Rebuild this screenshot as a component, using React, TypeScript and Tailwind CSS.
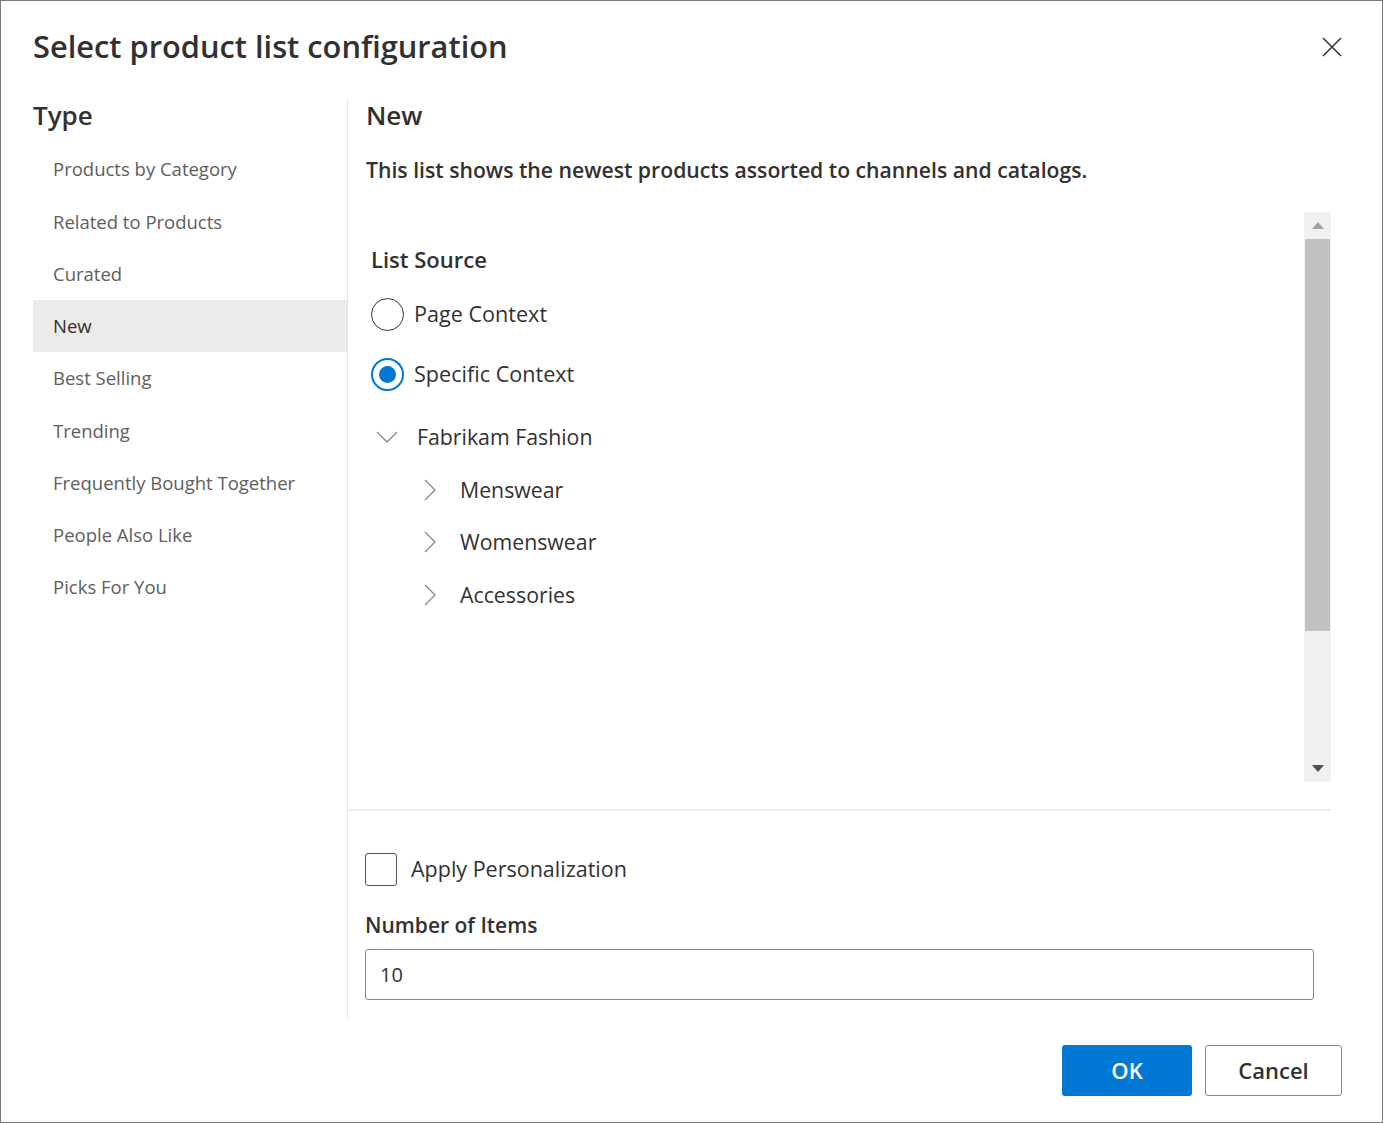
import React from 'react';

const types = [
  'Products by Category',
  'Related to Products',
  'Curated',
  'New',
  'Best Selling',
  'Trending',
  'Frequently Bought Together',
  'People Also Like',
  'Picks For You',
];

const children = ['Menswear', 'Womenswear', 'Accessories'];

const ChevronRight: React.FC = () => (
  <svg width="12" height="22" viewBox="0 0 12 22" fill="none">
    <path d="M1 1l10 10L1 21" stroke="#8a8886" strokeWidth="1.3" />
  </svg>
);

const ChevronDown: React.FC = () => (
  <svg width="22" height="12" viewBox="0 0 22 12" fill="none">
    <path d="M1 1l10 10L21 1" stroke="#8a8886" strokeWidth="1.3" />
  </svg>
);

const App: React.FC = () => {
  return (
    <div
      className="w-[1383px] h-[1123px] bg-white border border-[#7a7a7a] flex flex-col text-[#323130]"
      style={{ fontFamily: '"Open Sans", "Noto Sans", sans-serif' }}
    >
      {/* header */}
      <div className="flex justify-between items-center pt-[28px] pl-[32px] pr-[40px] h-[64px]">
        <h1 className="text-[30.8px] leading-[36px] font-semibold -mt-[2px]">Select product list configuration</h1>
        <svg width="20" height="20" viewBox="0 0 20 20">
          <path d="M1 1l18 18M19 1L1 19" stroke="#323130" strokeWidth="1.5" />
        </svg>
      </div>

      {/* body */}
      <div className="flex mt-[34px] h-[919px] pl-[32px]">
        <div className="w-[314px] flex flex-col">
          <div className="h-[32px] leading-[32px] text-[26px] font-semibold">Type</div>
          <ul className="mt-[12px]">
            {types.map((t) => (
              <li
                key={t}
                className={`h-[52.25px] flex items-center pl-[20px] text-[18.5px] ${
                  t === 'New' ? 'bg-[#edebe9] text-[#323130]' : 'text-[#605e5c]'
                }`}
              >
                {t}
              </li>
            ))}
          </ul>
        </div>

        <div className="w-[984px] border-l border-[#e6e6e6] flex flex-col">
          <div className="pl-[18px] h-[32px] leading-[32px] text-[26px] font-semibold">New</div>
          <p className="pl-[18px] mt-[25px] h-[28px] leading-[28px] text-[21.2px] font-semibold">
            This list shows the newest products assorted to channels and catalogs.
          </p>

          {/* scroll area */}
          <div className="mt-[28px] h-[570px] flex">
            <div className="flex-1 pl-[23px] pt-[32px]">
              <div className="h-[30px] leading-[30px] text-[22px] font-semibold">List Source</div>

              <div className="mt-[20px] h-[40px] flex items-center gap-[10px]">
                <span className="w-[33px] h-[33px] rounded-full border-[1.5px] border-[#333]" />
                <span className="text-[21.6px]">Page Context</span>
              </div>
              <div className="mt-[20px] h-[40px] flex items-center gap-[10px]">
                <span className="w-[33px] h-[33px] rounded-full border-2 border-[#0078d4] flex items-center justify-center">
                  <span className="w-[17px] h-[17px] rounded-full bg-[#0078d4]" />
                </span>
                <span className="text-[21.6px]">Specific Context</span>
              </div>

              <div className="mt-[23px] h-[40px] flex items-center">
                <span className="ml-[5px] w-[22px] flex items-center">
                  <ChevronDown />
                </span>
                <span className="ml-[19px] text-[21.3px]">Fabrikam Fashion</span>
              </div>

              {children.map((c) => (
                <div key={c} className="mt-[12.5px] h-[40px] flex items-center">
                  <span className="ml-[53px] w-[12px] flex items-center">
                    <ChevronRight />
                  </span>
                  <span className="ml-[24px] text-[21.3px]">{c}</span>
                </div>
              ))}
            </div>

            {/* scrollbar */}
            <div className="w-[27px] bg-[#f1f1f1] flex flex-col">
              <div className="h-[27px] flex items-center justify-center">
                <svg width="12" height="7" viewBox="0 0 12 7">
                  <path d="M0 7L6 0l6 7z" fill="#a3a3a3" />
                </svg>
              </div>
              <div className="h-[392px] mx-[1px] bg-[#c1c1c1]" />
              <div className="flex-1" />
              <div className="h-[27px] flex items-center justify-center">
                <svg width="12" height="7" viewBox="0 0 12 7">
                  <path d="M0 0l6 7 6-7z" fill="#505050" />
                </svg>
              </div>
            </div>
          </div>

          <div className="mt-[27px] h-[2px] bg-[#ededed]" />

          <div className="mt-[42px] pl-[17px] flex items-center gap-[14px] h-[33px]">
            <span className="w-[32px] h-[33px] rounded-[3px] border-[1.5px] border-[#555]" />
            <span className="text-[21.5px]">Apply Personalization</span>
          </div>

          <div className="mt-[25px] pl-[17px] h-[28px] leading-[28px] text-[21px] font-semibold">Number of Items</div>

          <div className="mt-[10px] ml-[17px] w-[949px] h-[51px] border-[1.5px] border-[#8a8886] rounded-[3px] flex items-center pl-[14px] text-[20px]">
            10
          </div>
        </div>
      </div>

      {/* footer */}
      <div className="mt-[27px] flex justify-end gap-[13px] pr-[40px]">
        <button className="w-[130px] h-[51px] bg-[#0078d4] text-white text-[22px] font-semibold rounded-[3px]">OK</button>
        <button className="w-[137px] h-[51px] border-[1.5px] border-[#8a8886] text-[22px] font-semibold text-[#323130] rounded-[3px]">
          Cancel
        </button>
      </div>
    </div>
  );
};

export default App;
